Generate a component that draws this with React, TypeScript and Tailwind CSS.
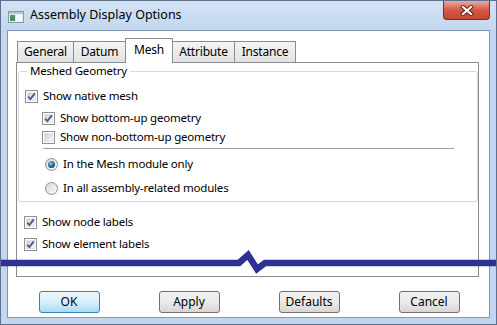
import React from "react";

function CheckBox({ checked }: { checked?: boolean }) {
  return (
    <span className="relative w-[13px] h-[13px] shrink-0 border border-[#8e8f8f] bg-white p-px">
      <span className="block w-full h-full bg-gradient-to-br from-[#cbcfd5] to-[#f6f6f6] border border-[#e0e3e8]" />
      {checked && (
        <svg className="absolute left-0 top-0" width="11" height="11" viewBox="0 0 11 11">
          <path d="M2.2 5.6 L4.4 8 L8.8 2.4" fill="none" stroke="#4a5a86" strokeWidth="1.8" />
        </svg>
      )}
    </span>
  );
}

function Radio({ checked }: { checked?: boolean }) {
  return (
    <span className="w-[13px] h-[13px] shrink-0 rounded-full border border-[#8e8f8f] bg-gradient-to-br from-[#d5d8dc] to-[#fbfbfb] flex items-center justify-center">
      {checked && (
        <span className="w-[7px] h-[7px] rounded-full bg-[radial-gradient(circle_at_40%_35%,#8fc4e6,#1d5f8c_55%,#0e3552)]" />
      )}
    </span>
  );
}

function Row({
  children,
  label,
  className,
}: {
  children: React.ReactNode;
  label: string;
  className?: string;
}) {
  return (
    <div className={"flex items-center h-[16px] gap-[5px] " + (className ?? "")}>
      {children}
      <span className="text-[11.5px] tracking-[-0.2px] leading-none text-black whitespace-nowrap">{label}</span>
    </div>
  );
}

function Tab({ label, width, active }: { label: string; width: string; active?: boolean }) {
  if (active) {
    return (
      <div
        className={
          "relative z-10 -ml-px -mb-px h-[25px] flex items-center justify-center border border-b-0 border-[#898c95] bg-white text-[12px] tracking-[-0.2px] pb-[2px] " +
          width
        }
      >
        {label}
      </div>
    );
  }
  return (
    <div
      className={
        "-ml-px first:ml-0 h-[21px] flex items-center justify-center border border-b-0 border-[#898c95] bg-gradient-to-b from-[#f4f4f4] to-[#e2e2e2] text-[12px] tracking-[-0.2px] " +
        width
      }
    >
      {label}
    </div>
  );
}

function Button({ label, primary }: { label: string; primary?: boolean }) {
  return (
    <button
      className={
        "w-[61px] h-[22px] rounded-[3px] border text-[12px] text-black " +
        (primary
          ? "border-[#3c7fb1] bg-gradient-to-b from-[#eaf6fd] via-[#d9f0fc] to-[#a7d9f5]"
          : "border-[#707070] bg-gradient-to-b from-[#f2f2f2] via-[#ebebeb] to-[#d6d6d6]")
      }
    >
      {label}
    </button>
  );
}

export default function App() {
  return (
    <div className="relative w-[497px] h-[325px] flex flex-col bg-[#c2d7ef] border border-[#5d718e] overflow-hidden font-['Segoe_UI','Noto_Sans',sans-serif] text-black">
      {/* title bar */}
      <div className="h-[29px] flex items-start shrink-0 bg-gradient-to-b from-[#d3e3f5] to-[#c2d7ef]">
        <svg className="ml-[7px] mt-[10px]" width="16" height="12" viewBox="0 0 16 12">
          <rect x="0.5" y="0.5" width="15" height="11" fill="#e8ecef" stroke="#8a9aa4" />
          <rect x="1" y="1" width="14" height="2" fill="#b9c7d2" />
          <rect x="2" y="4" width="5" height="6" fill="#4f8f66" />
          <rect x="8" y="4" width="6" height="6" fill="#f6f8f9" />
        </svg>
        <span className="ml-[6px] mt-[8px] text-[12.5px] leading-none">Assembly Display Options</span>
        <div className="ml-auto mr-[6px] w-[47px] h-[19px] rounded-b-[4px] border border-t-0 border-[#7e2b21] bg-gradient-to-b from-[#e9a99d] via-[#d35a43] to-[#c7452f] flex items-center justify-center">
          <svg width="14" height="11" viewBox="0 0 14 11">
            <path d="M3 2 L11 9 M11 2 L3 9" stroke="#5b1d15" strokeWidth="4" strokeLinecap="square" />
            <path d="M3 2 L11 9 M11 2 L3 9" stroke="#ffffff" strokeWidth="2.2" strokeLinecap="square" />
          </svg>
        </div>
      </div>

      {/* client area */}
      <div className="mx-[6px] mb-[6px] flex-1 flex flex-col bg-white border border-[#8196b3]">
        <div className="pl-[8px] pt-[7px] pr-[10px]">
          <div className="flex items-end h-[24px] pl-px">
            <Tab label="General" width="w-[57px]" />
            <Tab label="Datum" width="w-[53px]" />
            <Tab label="Mesh" width="w-[48px]" active />
            <Tab label="Attribute" width="w-[63px]" />
            <Tab label="Instance" width="w-[62px]" />
          </div>
          <div className="h-[215px] border border-[#898c95] flex flex-col">
            <fieldset className="ml-px mr-0 border border-[#d5d9de] rounded-[3px] pb-[5px]">
              <legend className="ml-[8px] px-[3px] text-[11.5px] tracking-[-0.2px] leading-[16px]">Meshed Geometry</legend>
              <Row label="Show native mesh" className="mt-[9px] pl-[6px]">
                <CheckBox checked />
              </Row>
              <Row label="Show bottom-up geometry" className="mt-[6px] pl-[23px]">
                <CheckBox checked />
              </Row>
              <Row label="Show non-bottom-up geometry" className="mt-[3px] pl-[23px]">
                <CheckBox />
              </Row>
              <div className="mt-[3px] ml-[24px] w-[411px] h-px bg-[#a0a0a0]" />
              <Row label="In the Mesh module only" className="mt-[7px] pl-[26px]">
                <Radio checked />
              </Row>
              <Row label="In all assembly-related modules" className="mt-[8px] pl-[26px]">
                <Radio />
              </Row>
            </fieldset>
            <Row label="Show node labels" className="mt-[12px] pl-[7px]">
              <CheckBox checked />
            </Row>
            <Row label="Show element labels" className="mt-[6px] pl-[7px]">
              <CheckBox checked />
            </Row>
          </div>
        </div>
        <div className="mt-[14px] flex justify-around pl-px">
          <Button label="OK" primary />
          <Button label="Apply" />
          <Button label="Defaults" />
          <Button label="Cancel" />
        </div>
      </div>

      {/* break marker over the dialog */}
      <svg className="absolute left-0 top-[245px] pointer-events-none" width="497" height="30" viewBox="0 0 497 30">
        <path
          d="M-2 17 L238 17 L247 9 L256 23 L264 17 L499 17"
          fill="none"
          stroke="#2e3192"
          strokeWidth="6.5"
          strokeLinejoin="miter"
        />
      </svg>
    </div>
  );
}
